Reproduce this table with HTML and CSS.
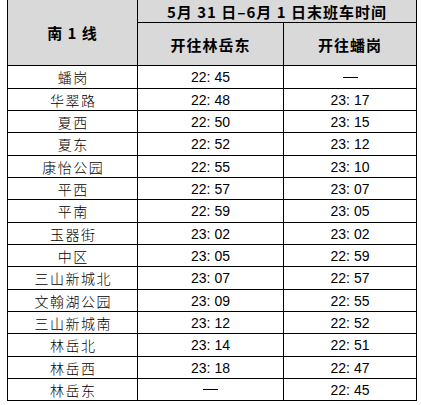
FILE: index.html
```html
<!DOCTYPE html>
<html lang="zh-CN">
<head>
<meta charset="utf-8">
<link rel="stylesheet" href="styles.css">
</head>
<body>
<div class="sheet">
  <div class="cell head name">南 1 线</div>
  <div class="cell head span2">5月 31 日–6月 1 日末班车时间</div>
  <div class="cell head">开往林岳东</div>
  <div class="cell head">开往蟠岗</div>

  <div class="cell st">蟠岗</div><div class="cell tm">22: 45</div><div class="cell dash"><span class="bar" title="—"></span></div>
  <div class="cell st">华翠路</div><div class="cell tm">22: 48</div><div class="cell tm">23: 17</div>
  <div class="cell st">夏西</div><div class="cell tm">22: 50</div><div class="cell tm">23: 15</div>
  <div class="cell st">夏东</div><div class="cell tm">22: 52</div><div class="cell tm">23: 12</div>
  <div class="cell st">康怡公园</div><div class="cell tm">22: 55</div><div class="cell tm">23: 10</div>
  <div class="cell st">平西</div><div class="cell tm">22: 57</div><div class="cell tm">23: 07</div>
  <div class="cell st">平南</div><div class="cell tm">22: 59</div><div class="cell tm">23: 05</div>
  <div class="cell st">玉器街</div><div class="cell tm">23: 02</div><div class="cell tm">23: 02</div>
  <div class="cell st">中区</div><div class="cell tm">23: 05</div><div class="cell tm">22: 59</div>
  <div class="cell st">三山新城北</div><div class="cell tm">23: 07</div><div class="cell tm">22: 57</div>
  <div class="cell st">文翰湖公园</div><div class="cell tm">23: 09</div><div class="cell tm">22: 55</div>
  <div class="cell st">三山新城南</div><div class="cell tm">23: 12</div><div class="cell tm">22: 52</div>
  <div class="cell st">林岳北</div><div class="cell tm">23: 14</div><div class="cell tm">22: 51</div>
  <div class="cell st">林岳西</div><div class="cell tm">23: 18</div><div class="cell tm">22: 47</div>
  <div class="cell st">林岳东</div><div class="cell dash"><span class="bar" title="—"></span></div><div class="cell tm">22: 45</div>
</div>
</body>
</html>
```
FILE: styles.css
```css
html, body {
  margin: 0;
  padding: 0;
  background: #ffffff;
}
body {
  padding-left: 7px;
  font-family: "Noto Sans CJK SC", "Noto Sans", sans-serif;
  color: #000;
}
.sheet {
  display: grid;
  width: 410px;
  box-sizing: border-box;
  grid-template-columns: 129px 145px 132px;
  grid-template-rows: 22px 42px repeat(5, 22px 21px 21px);
  gap: 1px;
  padding: 0 1px 1px 1px;
  background: #000;
}
.cell {
  background: #fff;
  display: flex;
  align-items: center;
  justify-content: center;
  font-size: 14px;
  line-height: 1;
  white-space: nowrap;
}
.head {
  background: #d9d9d9;
  font-weight: 700;
  font-size: 15px;
  letter-spacing: 1px;
}
.name {
  grid-row: 1 / 3;
}
.span2 {
  grid-column: 2 / 4;
}
.st {
  letter-spacing: 1.5px;
  padding-left: 1.5px;
  font-weight: 300;
}
.tm {
  font-family: "Liberation Sans", sans-serif;
  font-size: 14px;
}
.bar {
  display: block;
  width: 15px;
  height: 0;
  border-top: 1px solid #000;
}
```
